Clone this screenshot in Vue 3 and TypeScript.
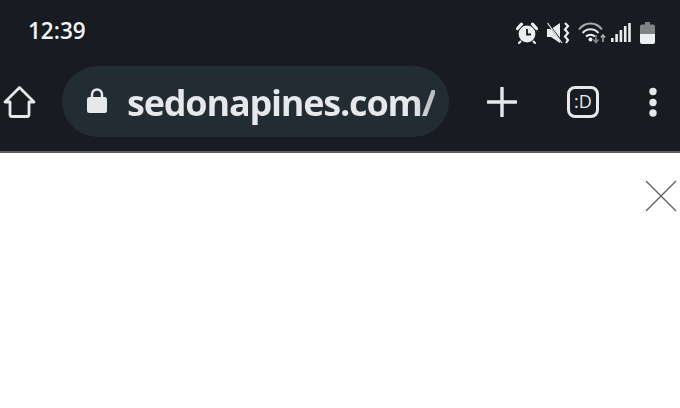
<script setup lang="ts">
const time = '12:39'
const url = 'sedonapines.com/'
</script>

<template>
  <div class="page">
    <header class="chrome">
      <div class="status-bar">
        <span class="time">{{ time }}</span>
        <div class="status-icons">
          <svg class="alarm" width="22" height="22" viewBox="0 0 22 22">
            <circle cx="11" cy="12" r="8.4" fill="#eceef0" />
            <path d="M1.5 6.5 5.5 2.2M20.5 6.5 16.5 2.2" stroke="#eceef0" stroke-width="3.2" stroke-linecap="round" />
            <path d="M4.5 19.5 3 21M17.5 19.5 19 21" stroke="#eceef0" stroke-width="2" stroke-linecap="round" />
            <path d="M11 7v5.5h4" fill="none" stroke="#181b20" stroke-width="1.8" />
          </svg>
          <svg class="mute" width="23" height="22" viewBox="0 0 23 22">
            <path d="M0 7h4L13 1v20L4 15H0z" fill="#eceef0" />
            <path d="M1 1.500 15 20" stroke="#181b20" stroke-width="1.8" />
            <path d="M0.500 1 15 21" stroke="#eceef0" stroke-width="1.200" />
            <path d="M18 1l3 3-3 3.500 3 3.500-3 3.500 3 3.500-2 3" fill="none" stroke="#eceef0" stroke-width="2.200" />
          </svg>
          <svg class="wifi" width="28" height="22" viewBox="0 0 28 22">
            <path d="M1 7.500C7-.5 18-.5 24 7.500" fill="none" stroke="#a9acae" stroke-width="2" />
            <path d="M4.500 11c4.500-5 11.500-5 16 0" fill="none" stroke="#dfe1e3" stroke-width="2" />
            <path d="M8 14.500c2.500-2.500 6.500-2.500 9 0" fill="none" stroke="#eceef0" stroke-width="2" />
            <circle cx="12.500" cy="17.500" r="2" fill="#eceef0" />
            <path d="M18 13v7M15.500 17.500 18 20.500l2.500-3" fill="none" stroke="#85888b" stroke-width="1.500" />
            <path d="M25 20v-7M22.800 15.500 25 13l2.200 2.500" fill="none" stroke="#a9acae" stroke-width="1.500" />
          </svg>
          <svg class="signal" width="20" height="21" viewBox="0 0 20 21">
            <rect x="0" y="16" width="2.600" height="4" fill="#eceef0" />
            <rect x="4.300" y="12" width="2.600" height="8" fill="#eceef0" />
            <rect x="8.600" y="8" width="2.600" height="12" fill="#eceef0" />
            <rect x="12.900" y="4" width="2.600" height="16" fill="#eceef0" />
            <rect x="17.200" y="1" width="2.600" height="19" fill="#eceef0" />
          </svg>
          <svg class="battery" width="15" height="22" viewBox="0 0 15 22">
            <path d="M5 0h5v2.500h3a2 2 0 0 1 2 2V12H0V4.500a2 2 0 0 1 2-2h3z" fill="#808285" />
            <path d="M0 12h15v8a2 2 0 0 1-2 2H2a2 2 0 0 1-2-2z" fill="#eceef0" />
          </svg>
        </div>
      </div>

      <div class="toolbar">
        <svg class="home" width="33" height="34" viewBox="0 0 33 34">
          <path d="M16.500 2.500 2 17h5v12.500a2 2 0 0 0 2 2h15a2 2 0 0 0 2-2V17h5z" fill="none" stroke="#e6e8ea" stroke-width="2.800" stroke-linejoin="round" />
        </svg>

        <div class="address">
          <svg class="lock" width="20" height="25" viewBox="0 0 20 25">
            <path d="M5 10V6.500a5 5 0 0 1 10 0V10" fill="none" stroke="#e6e8ea" stroke-width="2.400" />
            <rect y="9" width="20" height="16" rx="2.500" fill="#e6e8ea" />
          </svg>
          <span class="url">{{ url }}</span>
        </div>

        <svg class="plus" width="30" height="30" viewBox="0 0 30 30">
          <path d="M15 1v28M1 15h28" stroke="#e6e8ea" stroke-width="3.400" stroke-linecap="round" />
        </svg>

        <div class="tabs">:D</div>

        <svg class="more" width="10" height="30" viewBox="0 0 10 30">
          <circle cx="5" cy="4.500" r="3.700" fill="#e6e8ea" />
          <circle cx="5" cy="15.500" r="3.700" fill="#e6e8ea" />
          <circle cx="5" cy="26" r="3.700" fill="#e6e8ea" />
        </svg>
      </div>
    </header>

    <main class="content">
      <button class="close" aria-label="Close">
        <svg width="32" height="32" viewBox="0 0 32 32">
          <path d="M1 1 31 31M31 1 1 31" stroke="#5e5e5e" stroke-width="1.300" />
        </svg>
      </button>
    </main>
  </div>
</template>

<style>
body {
  margin: 0;
  background: #fff;
}
</style>

<style scoped>
.page {
  width: 680px;
  height: 408px;
  display: flex;
  flex-direction: column;
  overflow: hidden;
  font-family: "Open Sans", "Noto Sans", sans-serif;
}

.chrome {
  height: 151px;
  flex: none;
  background: #181b20;
  border-bottom: 2px solid #5a5f63;
}

.status-bar {
  height: 66px;
  padding: 0 25px 0 28px;
  display: flex;
  align-items: flex-start;
  justify-content: space-between;
}

.time {
  margin-top: 15px;
  font-size: 22.5px;
  line-height: 32px;
  font-weight: 600;
  color: #f2f3f4;
}

.status-icons {
  margin-top: 22px;
  display: flex;
  align-items: flex-start;
}

.alarm { margin-right: 9px; }
.mute { margin-right: 8px; }
.wifi { margin-right: 5px; }
.signal { margin-right: 9px; }

.toolbar {
  height: 71px;
  padding-left: 3px;
  display: flex;
  align-items: center;
}

.home {
  margin-right: 26px;
}

.address {
  width: 387px;
  height: 71px;
  border-radius: 36px;
  background: #222d33;
  display: flex;
  align-items: center;
  box-sizing: border-box;
  padding-left: 25px;
  margin-right: 38px;
}

.lock {
  margin-right: 20px;
  margin-top: -2px;
}

.url {
  margin-top: 2px;
  font-size: 36px;
  font-weight: 700;
  line-height: 50px;
  letter-spacing: -1.2px;
  white-space: nowrap;
  background: linear-gradient(90deg, #e6e8ea 286px, #b4b9bb 308px);
  -webkit-background-clip: text;
  background-clip: text;
  color: transparent;
}

.plus {
  margin-right: 50px;
}

.tabs {
  width: 32px;
  height: 32px;
  box-sizing: border-box;
  border: 3px solid #e6e8ea;
  border-radius: 8px;
  margin-right: 49px;
  color: #e6e8ea;
  font-size: 18px;
  font-weight: 400;
  line-height: 25px;
  text-align: center;
}

.content {
  flex: 1;
  background: #fff;
  display: flex;
  justify-content: flex-end;
  align-items: flex-start;
  padding: 27px 3px 0 0;
}

.close {
  padding: 0;
  border: none;
  background: transparent;
  line-height: 0;
}
</style>
